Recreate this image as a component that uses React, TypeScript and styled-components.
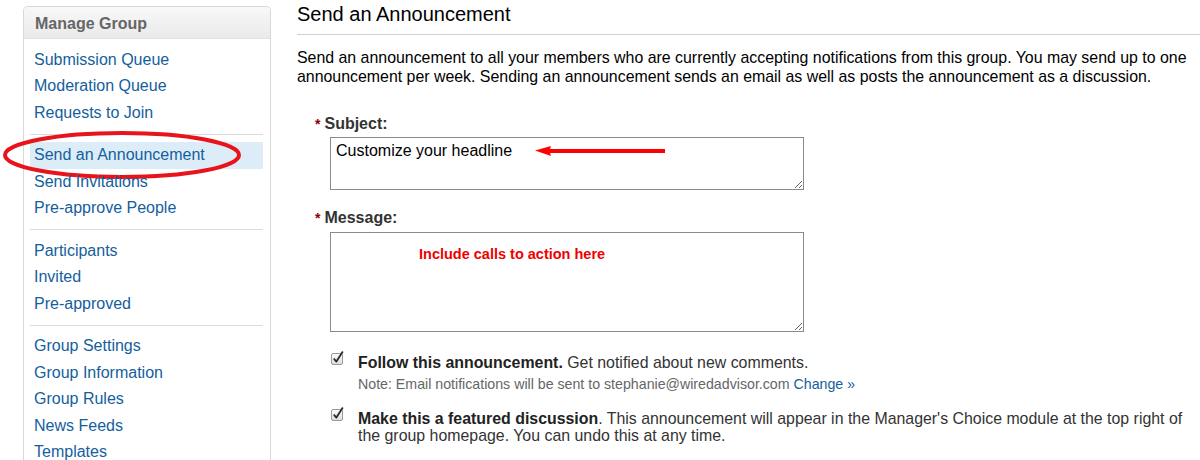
import React from "react";
import styled, { createGlobalStyle } from "styled-components";

const GlobalStyle = createGlobalStyle`
  html, body {
    margin: 0;
    padding: 0;
    background: #fff;
    font-family: "Liberation Sans", Arial, sans-serif;
    overflow: hidden;
  }
`;

const Page = styled.div`
  display: flex;
  align-items: flex-start;
  width: 1200px;
  height: 460px;
  overflow: hidden;
`;

const Sidebar = styled.aside`
  margin: 6px 0 0 23px;
  width: 248px;
  height: 480px;
  box-sizing: border-box;
  border: 1px solid #d8d8d8;
  border-bottom: none;
  border-radius: 5px 5px 0 0;
  flex-shrink: 0;
`;

const SideHeader = styled.div`
  height: 30px;
  padding-top: 1px;
  line-height: 31px;
  padding-left: 11px;
  font-size: 16px;
  font-weight: bold;
  color: #666;
  background: linear-gradient(#f8f8f8, #eaeaea);
  border-radius: 5px 5px 0 0;
  border-bottom: 1px solid #e2e2e2;
`;

const Group = styled.ul`
  list-style: none;
  margin: 0 7px 0 6px;
  padding: 7.5px 0;
  & + & {
    border-top: 1px solid #dcdcdc;
  }
`;

const Item = styled.li<{ $active?: boolean }>`
  position: relative;
  height: 26.5px;
  line-height: 26.5px;
  padding-left: 4px;
  font-size: 16px;
  color: #14609d;
  background: ${(p) => (p.$active ? "#ddedf8" : "transparent")};
`;

const Ellipse = styled.svg`
  position: absolute;
  left: -30px;
  top: -14px;
  pointer-events: none;
`;

const Main = styled.main`
  margin-left: 26px;
  flex: 1;
`;

const Title = styled.h1`
  margin: 0;
  padding: 2px 0 8px;
  font-size: 20px;
  line-height: 24px;
  font-weight: normal;
  color: #000;
  border-bottom: 1px solid #cfcfcf;
`;

const Intro = styled.p`
  margin: 13px 0 0;
  font-size: 15.9px;
  line-height: 19px;
  color: #000;
`;

const Form = styled.div`
  margin-top: 28px;
  padding-left: 18px;
`;

const Label = styled.div<{ $gap?: number }>`
  margin-top: ${(p) => p.$gap ?? 0}px;
  font-size: 16px;
  line-height: 20px;
  font-weight: bold;
  color: #333;
  & > span {
    color: #8b0000;
    font-size: 14px;
    margin-right: 4px;
  }
`;

const FieldWrap = styled.div<{ $top: number }>`
  position: relative;
  margin: ${(p) => p.$top}px 0 0 15px;
  width: 474px;
`;

const Area = styled.textarea<{ $h: number }>`
  display: block;
  box-sizing: border-box;
  width: 474px;
  height: ${(p) => p.$h}px;
  border: 1px solid #8a8a8a;
  padding: 4px 5px;
  font-family: "Liberation Sans", Arial, sans-serif;
  font-size: 16px;
  line-height: 18px;
  color: #000;
  outline: none;
`;

const Arrow = styled.svg`
  position: absolute;
  left: 205px;
  top: 8px;
  pointer-events: none;
`;

const Callout = styled.div`
  position: absolute;
  left: 89px;
  top: 14px;
  font-size: 14.5px;
  font-weight: bold;
  color: #ee0000;
`;

const CheckRow = styled.div<{ $gap: number }>`
  display: flex;
  margin: ${(p) => p.$gap}px 0 0 15px;
`;

const Box = styled.svg`
  flex-shrink: 0;
  margin: -4px 13px 0 1px;
`;

const CheckText = styled.div`
  font-size: 15.9px;
  line-height: 17px;
  color: #333;
  & b {
    color: #222;
  }
`;

const Note = styled.div`
  margin-top: 5px;
  font-size: 14.2px;
  line-height: 17px;
  color: #666;
  & a {
    color: #14609d;
    text-decoration: none;
  }
`;

const CheckBox = () => (
  <Box width="14" height="15" viewBox="0 0 14 15">
    <defs>
      <linearGradient id="cb" x1="0" y1="0" x2="0" y2="1">
        <stop offset="0" stopColor="#fdfdfd" />
        <stop offset="1" stopColor="#dcdcdc" />
      </linearGradient>
    </defs>
    <rect x="0.5" y="3.5" width="11" height="11" rx="1.5" fill="url(#cb)" stroke="#9a9a9a" />
    <path d="M2.8 8.6 L5.4 11.6 L11.8 1.6" fill="none" stroke="#2a2a2a" strokeWidth="1.8" strokeLinejoin="round" />
  </Box>
);

const groups = [
  ["Submission Queue", "Moderation Queue", "Requests to Join"],
  ["Send an Announcement", "Send Invitations", "Pre-approve People"],
  ["Participants", "Invited", "Pre-approved"],
  ["Group Settings", "Group Information", "Group Rules", "News Feeds", "Templates"],
];

export default function App() {
  return (
    <Page>
      <GlobalStyle />
      <Sidebar>
        <SideHeader>Manage Group</SideHeader>
        {groups.map((g, i) => (
          <Group key={i}>
            {g.map((name) => (
              <Item key={name} $active={name === "Send an Announcement"}>
                {name}
                {name === "Send an Announcement" && (
                  <Ellipse width="246" height="56" viewBox="0 0 246 56">
                    <ellipse cx="122" cy="27" rx="117" ry="22" fill="none" stroke="#e8141b" strokeWidth="4" />
                  </Ellipse>
                )}
              </Item>
            ))}
          </Group>
        ))}
      </Sidebar>
      <Main>
        <Title>Send an Announcement</Title>
        <Intro>
          Send an announcement to all your members who are currently accepting notifications from this group. You may
          send up to one announcement per week. Sending an announcement sends an email as well as posts the
          announcement as a discussion.
        </Intro>
        <Form>
          <Label>
            <span>*</span>Subject:
          </Label>
          <FieldWrap $top={3}>
            <Area $h={53} defaultValue="Customize your headline" />
            <Arrow width="132" height="12" viewBox="0 0 132 12">
              <path d="M0 5.5 L16 1 L15 4 L130 4 L130 8 L15 8 L16 11 Z" fill="#ff0000" />
            </Arrow>
          </FieldWrap>
          <Label $gap={18}>
            <span>*</span>Message:
          </Label>
          <FieldWrap $top={4}>
            <Area $h={100} defaultValue="" />
            <Callout>Include calls to action here</Callout>
          </FieldWrap>
          <CheckRow $gap={22}>
            <CheckBox />
            <div>
              <CheckText>
                <b>Follow this announcement.</b> Get notified about new comments.
              </CheckText>
              <Note>
                Note: Email notifications will be sent to stephanie@wiredadvisor.com <a href="#">Change »</a>
              </Note>
            </div>
          </CheckRow>
          <CheckRow $gap={17}>
            <CheckBox />
            <CheckText>
              <b>Make this a featured discussion</b>. This announcement will appear in the Manager's Choice module at
              the top right of the group homepage. You can undo this at any time.
            </CheckText>
          </CheckRow>
        </Form>
      </Main>
    </Page>
  );
}
